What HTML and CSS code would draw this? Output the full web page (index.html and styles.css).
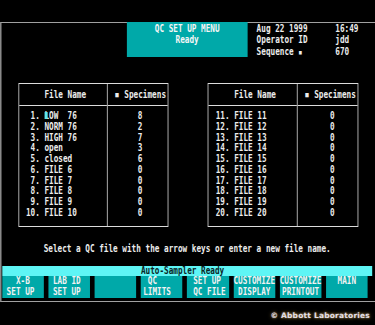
FILE: index.html
```html
<!DOCTYPE html>
<html>
<head>
<meta charset="utf-8">
<link rel="stylesheet" href="styles.css">
</head>
<body>
<div class="screen">
  <div class="head">
    <div class="title">
      <div>QC SET UP MENU</div>
      <div>Ready</div>
    </div>
    <div class="info">
      <div class="irow"><span class="lbl">Aug 22 1999</span><span>16:49</span></div>
      <div class="irow"><span class="lbl">Operator ID</span><span>jdd</span></div>
      <div class="irow"><span class="lbl">Sequence <span class="sq">▪</span></span><span>670</span></div>
    </div>
  </div>

  <div class="tables">
    <div class="tbl">
      <div class="c1">
        <div class="th">File Name</div>
        <div class="tb">
          <div class="r"><span class="n">1.</span><span class="cur">L</span>OW  76</div>
          <div class="r"><span class="n">2.</span>NORM 76</div>
          <div class="r"><span class="n">3.</span>HIGH 76</div>
          <div class="r"><span class="n">4.</span>open</div>
          <div class="r"><span class="n">5.</span>closed</div>
          <div class="r"><span class="n">6.</span>FILE 6</div>
          <div class="r"><span class="n">7.</span>FILE 7</div>
          <div class="r"><span class="n">8.</span>FILE 8</div>
          <div class="r"><span class="n">9.</span>FILE 9</div>
          <div class="r"><span class="n">10.</span>FILE 10</div>
        </div>
      </div>
      <div class="c2">
        <div class="th"><span class="sq big">▪</span> Specimens</div>
        <div class="tb">
          <div class="r">8</div><div class="r">2</div><div class="r">7</div><div class="r">3</div><div class="r">6</div>
          <div class="r">0</div><div class="r">0</div><div class="r">0</div><div class="r">0</div><div class="r">0</div>
        </div>
      </div>
    </div>

    <div class="tbl">
      <div class="c1">
        <div class="th">File Name</div>
        <div class="tb">
          <div class="r"><span class="n">11.</span>FILE 11</div>
          <div class="r"><span class="n">12.</span>FILE 12</div>
          <div class="r"><span class="n">13.</span>FILE 13</div>
          <div class="r"><span class="n">14.</span>FILE 14</div>
          <div class="r"><span class="n">15.</span>FILE 15</div>
          <div class="r"><span class="n">16.</span>FILE 16</div>
          <div class="r"><span class="n">17.</span>FILE 17</div>
          <div class="r"><span class="n">18.</span>FILE 18</div>
          <div class="r"><span class="n">19.</span>FILE 19</div>
          <div class="r"><span class="n">20.</span>FILE 20</div>
        </div>
      </div>
      <div class="c2 right">
        <div class="th"><span class="sq big">▪</span> Specimens</div>
        <div class="tb">
          <div class="r">0</div><div class="r">0</div><div class="r">0</div><div class="r">0</div><div class="r">0</div>
          <div class="r">0</div><div class="r">0</div><div class="r">0</div><div class="r">0</div><div class="r">0</div>
        </div>
      </div>
    </div>
  </div>

  <div class="prompt">Select a QC file with the arrow keys or enter a new file name.</div>

  <div class="bar">Auto-Sampler Ready</div>

  <div class="btns">
    <div class="btn b1"><div class="ln">  X-B</div><div class="ln">SET UP</div></div>
    <div class="btn b2"><div class="ln">LAB ID</div><div class="ln">SET UP</div></div>
    <div class="btn"></div>
    <div class="btn b4"><div class="ln"> QC</div><div class="ln">LIMITS</div></div>
    <div class="btn b5"><div class="ln">SET UP</div><div class="ln">QC FILE</div></div>
    <div class="btn ctr"><div class="ln">CUSTOMIZE</div><div class="ln">DISPLAY</div></div>
    <div class="btn ctr"><div class="ln">CUSTOMIZE</div><div class="ln">PRINTOUT</div></div>
    <div class="btn ctr"><div class="ln">MAIN</div></div>
  </div>
</div>
<div class="copy">© Abbott Laboratories</div>
</body>
</html>
```

FILE: styles.css
```css
html, body {
  margin: 0;
  padding: 0;
  background: #000;
  overflow: hidden;
}
body {
  width: 375px;
  height: 325px;
}

.screen {
  margin-top: 22px;
  width: 80ch;
  padding: 0 8px 3px 0.6px;
  border-left: 2px solid #8a8a8a;
  border-top: 1px solid #a0a0a0;
  border-bottom: 1px solid #a0a0a0;
  font: bold 10px "DejaVu Sans Mono", monospace;
  color: #ececec;
  transform: scaleX(0.769);
  transform-origin: 0 0;
}

/* header */
.head {
  display: flex;
  height: 34px;
}
.title {
  margin-left: 27ch;
  margin-top: -1px;
  width: 26ch;
  height: 35px;
  box-sizing: border-box;
  padding-top: 1px;
  background: #00a9a9;
  color: #f6f6f6;
  text-align: center;
  line-height: 11px;
}
.info {
  margin-left: 2ch;
  line-height: 11.3px;
}
.irow {
  display: flex;
}
.lbl {
  width: 17ch;
  white-space: pre;
}
.sq {
  font-size: 9px;
}
.sq.big {
  font-size: 11px;
}

/* tables */
.tables {
  display: flex;
  margin-top: 26px;
  padding-left: 3.5ch;
  gap: calc(9ch - 3px);
}
.tbl {
  display: flex;
  border: 1px solid #dcdcdc;
}
.c1 {
  width: 19ch;
}
.c2 {
  width: 13ch;
  border-left: 1px solid #dcdcdc;
}
.th {
  height: 21px;
  line-height: 21px;
  border-bottom: 1px solid #dcdcdc;
  white-space: pre;
}
.c1 .th {
  padding-left: 5.5ch;
}
.c2 .th {
  padding-left: 1.5ch;
}
.tb {
  padding-top: 5.3px;
  padding-bottom: 8px;
  line-height: 10.73px;
}
.r {
  height: 10.73px;
  white-space: pre;
}
.c1 .tb {
  padding-left: 1.5ch;
}
.c2 .tb {
  padding-left: 6.5ch;
}
.c2.right .tb {
  padding-left: 7ch;
}
.n {
  display: inline-block;
  width: 3ch;
  margin-right: 1ch;
  text-align: right;
}
.cur {
  display: inline-block;
  position: relative;
}
.cur::before {
  content: "";
  position: absolute;
  left: 0;
  top: 0.4px;
  width: 0.72ch;
  height: 7.6px;
  background: #5ee6ea;
}

/* prompt */
.prompt {
  margin-top: 16px;
  padding-left: 9ch;
  line-height: 11px;
  white-space: pre;
}

/* status bar */
.bar {
  margin-top: 11.5px;
  width: 80ch;
  height: 10px;
  box-sizing: border-box;
  padding-left: 30ch;
  line-height: 10px;
  background: #5ef5f5;
  color: #0b2626;
}

/* function keys */
.btns {
  display: flex;
  gap: 1ch;
  height: 22px;
}
.btn {
  width: 9ch;
  box-sizing: border-box;
  background: #00a9a9;
  color: #f2f2f2;
  line-height: 10.7px;
}
.ln {
  height: 10.7px;
  white-space: pre;
}
.b1 {
  padding-left: 1ch;
}
.b2 {
  padding-left: 1ch;
}
.b4 {
  padding-left: 0.5ch;
}
.b5 {
  padding-left: 1.3ch;
}
.ctr {
  text-align: center;
}

/* watermark */
.copy {
  margin-top: 9px;
  padding-right: 5px;
  text-align: right;
  font: bold 7.5px "DejaVu Sans", sans-serif;
  letter-spacing: 0.2px;
  line-height: 10px;
  color: #e2dfe8;
  text-shadow: 0 0 2px #b39a5a, 0 0 4px #7d6a35;
}
```
